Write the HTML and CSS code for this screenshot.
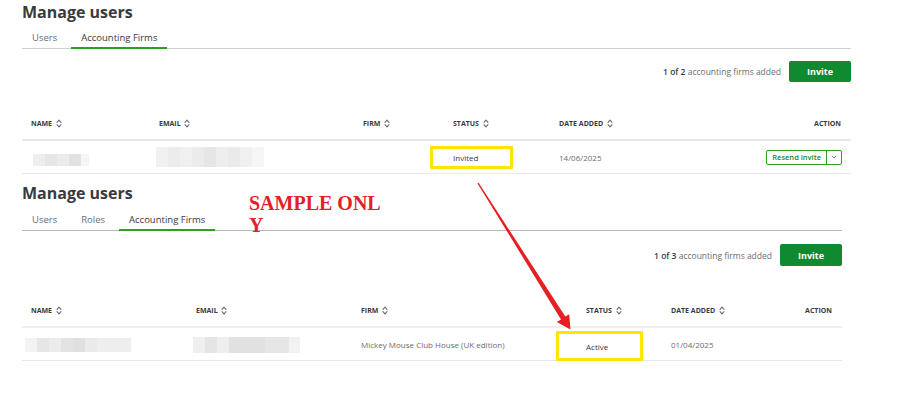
FILE: index.html
```html
<!DOCTYPE html>
<html>
<head>
    <title>Manage users</title>
    <link rel="stylesheet" href="styles.css">
</head>
<body>
<div class="page">

    <!-- first capture -->
    <div class="panel panel-old">
        <h1 class="title">Manage users</h1>
        <div class="tabs">
            <span class="tab">Users</span>
            <span class="tab active">Accounting Firms</span>
        </div>
        <div class="toolbar">
            <span class="count"><b>1 of 2</b> accounting firms added</span>
            <button class="invite">Invite</button>
        </div>
        <div class="table">
            <div class="row head">
                <span>NAME <svg class="sort" width="6" height="9" viewBox="0 0 6 9"><path d="M1 3.4 L3 1.2 L5 3.4 M1 5.6 L3 7.8 L5 5.6"/></svg></span>
                <span>EMAIL <svg class="sort" width="6" height="9" viewBox="0 0 6 9"><path d="M1 3.4 L3 1.2 L5 3.4 M1 5.6 L3 7.8 L5 5.6"/></svg></span>
                <span>FIRM <svg class="sort" width="6" height="9" viewBox="0 0 6 9"><path d="M1 3.4 L3 1.2 L5 3.4 M1 5.6 L3 7.8 L5 5.6"/></svg></span>
                <span>STATUS <svg class="sort" width="6" height="9" viewBox="0 0 6 9"><path d="M1 3.4 L3 1.2 L5 3.4 M1 5.6 L3 7.8 L5 5.6"/></svg></span>
                <span>DATE ADDED <svg class="sort" width="6" height="9" viewBox="0 0 6 9"><path d="M1 3.4 L3 1.2 L5 3.4 M1 5.6 L3 7.8 L5 5.6"/></svg></span>
                <span class="action">ACTION</span>
            </div>
            <div class="row">
                <span><i class="blur blur-name1"></i></span>
                <span><i class="blur blur-email1"></i></span>
                <span></span>
                <span><span class="hl hl-invited">Invited</span></span>
                <span>14/06/2025</span>
                <span class="action">
                    <span class="resend"><span class="resend-main">Resend invite</span><span class="resend-drop"><svg width="6" height="4" viewBox="0 0 6 4"><path d="M0.8 0.8 L3 3 L5.2 0.8"/></svg></span></span>
                </span>
            </div>
        </div>
    </div>

    <!-- second capture -->
    <div class="panel panel-new">
        <h1 class="title">Manage users</h1>
        <div class="tabs">
            <span class="tab">Users</span>
            <span class="tab">Roles</span>
            <span class="tab active">Accounting Firms</span>
        </div>
        <div class="toolbar">
            <span class="count"><b>1 of 3</b> accounting firms added</span>
            <button class="invite">Invite</button>
        </div>
        <div class="table">
            <div class="row head">
                <span>NAME <svg class="sort" width="6" height="9" viewBox="0 0 6 9"><path d="M1 3.4 L3 1.2 L5 3.4 M1 5.6 L3 7.8 L5 5.6"/></svg></span>
                <span>EMAIL <svg class="sort" width="6" height="9" viewBox="0 0 6 9"><path d="M1 3.4 L3 1.2 L5 3.4 M1 5.6 L3 7.8 L5 5.6"/></svg></span>
                <span>FIRM <svg class="sort" width="6" height="9" viewBox="0 0 6 9"><path d="M1 3.4 L3 1.2 L5 3.4 M1 5.6 L3 7.8 L5 5.6"/></svg></span>
                <span>STATUS <svg class="sort" width="6" height="9" viewBox="0 0 6 9"><path d="M1 3.4 L3 1.2 L5 3.4 M1 5.6 L3 7.8 L5 5.6"/></svg></span>
                <span>DATE ADDED <svg class="sort" width="6" height="9" viewBox="0 0 6 9"><path d="M1 3.4 L3 1.2 L5 3.4 M1 5.6 L3 7.8 L5 5.6"/></svg></span>
                <span class="action">ACTION</span>
            </div>
            <div class="row">
                <span><i class="blur blur-name2"></i></span>
                <span><i class="blur blur-email2"></i></span>
                <span>Mickey Mouse Club House (UK edition)</span>
                <span><span class="hl hl-active">Active</span></span>
                <span>01/04/2025</span>
                <span class="action"></span>
            </div>
        </div>
    </div>

    <div class="stamp">SAMPLE ONL<br>Y</div>

    <svg class="arrow" width="900" height="398" viewBox="0 0 900 398">
        <polygon points="477.4,183.3 478.6,182.7 565.3,316.6 569.2,314.2 570.5,329.5 556.8,321.9 561,319.4"/>
    </svg>
</div>
</body>
</html>
```

FILE: styles.css
```css
body { margin: 0; background: #fff; font-family: "Open Sans", Arial, sans-serif; color: #393a3d; }
.page { position: relative; width: 900px; height: 398px; overflow: hidden; }

.panel { margin-left: 22px; }
.panel-old { width: 829px; }
.panel-new { width: 820px; margin-top: 7px; }

.title { margin: 0; height: 25px; line-height: 25px; font-size: 16px; font-weight: 700; color: #393a3d; }
.panel-new .title { height: 26px; }

.tabs { display: flex; gap: 4px; height: 23px; border-bottom: 1px solid #cfd0d2; }
.panel-new .tabs { border-bottom-color: #b9babd; }
.tab { box-sizing: border-box; height: 24px; margin-bottom: -1px; padding: 3px 10px 0; line-height: 19px; font-size: 9.5px; color: #6b6c72; border-bottom: 2px solid transparent; }
.tab.active { color: #393a3d; border-bottom-color: #2ca01c; }

.toolbar { display: flex; justify-content: flex-end; align-items: center; gap: 8px; margin-top: 12px; }
.panel-new .toolbar { margin-top: 13px; }
.count { font-size: 8.5px; color: #6b6c72; }
.count b { color: #393a3d; font-weight: 600; }
.invite { width: 62px; height: 21px; border: 0; border-radius: 2px; background: #108a30; color: #fff; font-family: inherit; font-size: 9px; font-weight: 700; padding: 0; }
.panel-new .invite { height: 22px; }

.table { margin-top: 25px; }
.panel-new .table { margin-top: 28px; }
.row { display: grid; align-items: center; height: 32px; padding: 0 10px 0 9px; border-bottom: 1px solid #e7e8ea; font-size: 8px; color: #6b6c72; }
.row.head { height: 32px; font-size: 7px; font-weight: 700; color: #393a3d; border-bottom: 2px solid #e7e8ea; }
.panel-old .row { grid-template-columns: 128px 204px 90px 106px 1fr auto; }
.panel-new .row { grid-template-columns: 165px 165px 225px 85px 1fr auto; }
.panel-new .row.head { border-bottom-color: #eceef0; }
.action { text-align: right; }

.sort { vertical-align: -2px; margin-left: 2px; }
.sort path { fill: none; stroke: #6b6c72; stroke-width: 1.1; stroke-linecap: round; stroke-linejoin: round; }

.blur { display: block; height: 12px; }
.blur-name1 { width: 56px; margin-left: 2px; margin-top: 6px; background: linear-gradient(to right, #eeeeee 0 12px, #e6e6e6 12px 24px, #ebebeb 24px 36px, #e2e2e2 36px 48px, #f5f5f5 48px); }
.blur-email1 { width: 108px; margin-left: -3px; height: 20px; background: linear-gradient(to right, #f1f1f1 0 12px, #ececec 12px 24px, #f0f0f0 24px 36px, #ebebeb 36px 48px, #e6e6e6 48px 60px, #eeeeee 60px 72px, #eaeaea 72px 84px, #f0f0f0 84px 96px, #f6f6f6 96px); }
.blur-name2 { width: 106px; margin-left: -6px; height: 14px; background: linear-gradient(to right, #f3f3f3 0 12px, #e6e6e6 12px 24px, #ececec 24px 36px, #e3e3e3 36px 48px, #e0e0e0 48px 60px, #eaeaea 60px 72px, #eeeeee 72px); }
.blur-email2 { width: 107px; margin-left: -3px; height: 16px; background: linear-gradient(to right, #efefef 0 12px, #e5e5e5 12px 24px, #eeeeee 24px 36px, #e1e1e1 36px 72px, #e6e6e6 72px 96px, #f2f2f2 96px); }

.hl { display: block; width: fit-content; border: 3px solid #ffe500; color: #393a3d; line-height: 11px; }
.hl-invited { padding: 3px 32px 3px 20px; margin-left: -23px; }
.hl-active { padding: 7px 32px 6px 27px; margin-left: -30px; margin-top: 3px; }

.resend { display: inline-flex; height: 13px; border: 1px solid #2ca01c; border-radius: 2px; font-size: 7.5px; font-weight: 600; color: #108a30; margin-right: -1px; }
.resend-main { padding: 0 5px; line-height: 13px; }
.resend-drop { display: flex; align-items: center; padding: 0 4px; border-left: 1px solid #2ca01c; }
.resend-drop path { fill: none; stroke: #6b6c72; stroke-width: 0.9; }

.stamp { position: absolute; left: 249px; top: 192px; font-family: "Liberation Serif", "Times New Roman", serif; font-weight: 700; font-size: 20px; line-height: 22px; color: #e2202a; }
.arrow { position: absolute; left: 0; top: 0; pointer-events: none; }
.arrow polygon { fill: #e51f23; }
```
